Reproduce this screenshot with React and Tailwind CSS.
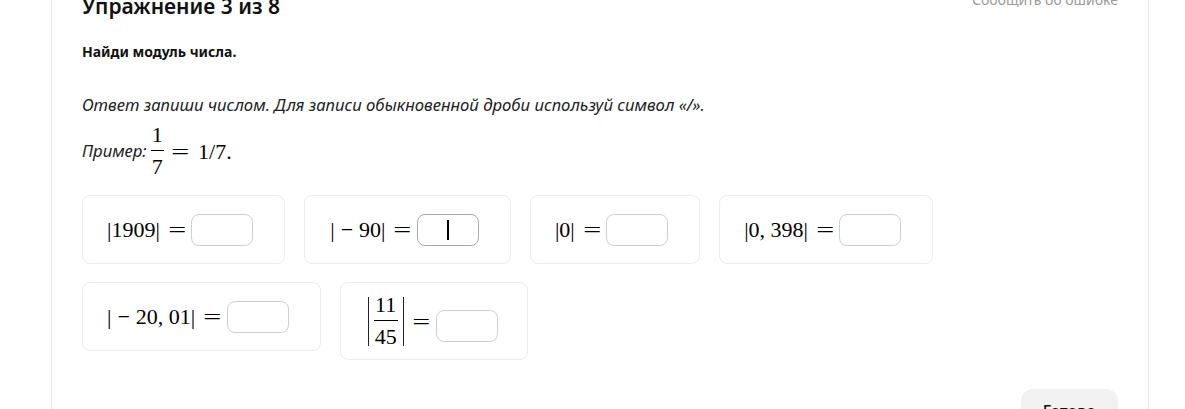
import React from "react";

const mathFont = { fontFamily: '"Liberation Serif", "DejaVu Serif", serif' };

const Frac = ({ top, bottom }) => (
  <span className="inline-flex flex-col items-center align-middle leading-none">
    <span className="px-[1px] pb-[4px]">{top}</span>
    <span className="w-full border-t border-black" />
    <span className="px-[1px] pt-[5px]">{bottom}</span>
  </span>
);

const Eq = ({ className }) => (
  <span className={`inline-block scale-x-[1.45] ${className}`}>=</span>
);

const Input = ({ focused }) => (
  <div
    className={`w-[62px] h-[32px] rounded-lg border flex items-center justify-center bg-white ${
      focused ? "border-[#a8a8a8]" : "border-[#cfcfcf]"
    }`}
  >
    {focused && <span className="w-[1.5px] h-[20px] bg-black" />}
  </div>
);

const Card = ({ children, focused, pl = "pl-[24px]" }) => (
  <div
    className={`flex items-center ${pl} pr-[31px] py-[17px] border border-[#ececec] rounded-lg`}
  >
    <span className="flex items-center text-[22px] text-black" style={mathFont}>
      {children}
      <Eq className="ml-[11px] mr-[8px]" />
    </span>
    <Input focused={focused} />
  </div>
);

const Bar = () => <span className="text-black">|</span>;

const Minus = () => <span className="mx-[6px]">−</span>;

export default function App() {
  return (
    <div
      className="h-[409px] overflow-hidden bg-white"
      style={{ fontFamily: '"Noto Sans", "Open Sans", sans-serif' }}
    >
      <div className="ml-[51px] w-[1098px] border-x border-[#e6e6e6] -mt-[8px] px-[30px] pb-[40px]">
        <div className="flex justify-between items-start">
          <h1 className="text-[21px] leading-[28px] font-semibold text-[#111]">
            Упражнение 3 из 8
          </h1>
          <span className="text-[14px] leading-[20px] text-[#9a9a9a] mt-[-2px]">
            Сообщить об ошибке
          </span>
        </div>

        <p className="mt-[22px] text-[14px] leading-[20px] font-bold text-[#111]">
          Найди модуль числа.
        </p>

        <p className="mt-[31px] text-[16.7px] leading-[24px] italic text-[#222]">
          Ответ запиши числом. Для записи обыкновенной дроби используй символ «/».
        </p>

        <div className="mt-[7px] flex items-center text-[16.7px] italic text-[#222]">
          <span>Пример:</span>
          <span className="ml-[4px] flex items-center text-[22px] not-italic text-black" style={mathFont}>
            <Frac top="1" bottom="7" />
            <Eq className="ml-[10px] mr-[12px]" />
            <span>1/7.</span>
          </span>
        </div>

        <div className="mt-[17px] flex gap-[19px] items-start">
          <Card>
            <Bar />1909<Bar />
          </Card>
          <Card focused pl="pl-[25px]">
            <Bar />
            <Minus />90<Bar />
          </Card>
          <Card>
            <Bar />0<Bar />
          </Card>
          <Card>
            <Bar />0,&nbsp;398<Bar />
          </Card>
        </div>

        <div className="mt-[18px] flex gap-[19px] items-start">
          <Card>
            <Bar />
            <Minus />20,&nbsp;01<Bar />
          </Card>
          <div className="flex items-center pl-[27px] pr-[29px] py-[11px] border border-[#ececec] rounded-lg">
            <span className="flex items-center text-[22px] text-black" style={mathFont}>
              <span className="w-[1px] h-[49px] bg-[#222] mr-[5px]" />
              <Frac top="11" bottom="45" />
              <span className="w-[1px] h-[49px] bg-[#222] ml-[5px]" />
              <Eq className="ml-[11px] mr-[9px]" />
            </span>
            <div className="mt-[10px]">
              <Input />
            </div>
          </div>
        </div>

        <div className="flex justify-end mt-[29px]">
          <button className="h-[44px] px-[22px] rounded-xl bg-[#f2f2f2] text-[16px] text-[#111] font-medium">
            Готово
          </button>
        </div>
      </div>
    </div>
  );
}
